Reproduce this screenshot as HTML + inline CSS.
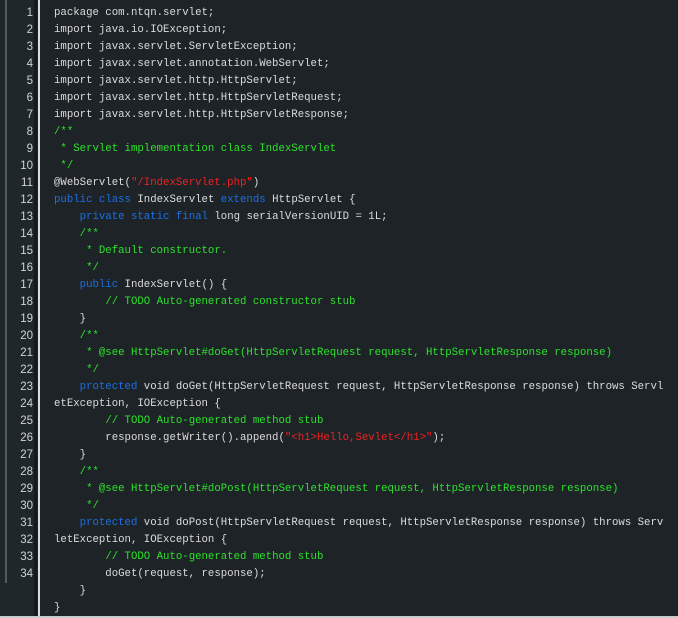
<!DOCTYPE html>
<html><head><style>
html,body{margin:0;padding:0;}
body{width:678px;height:618px;background:#1d2326;position:relative;overflow:hidden;font-family:Consolas,"Liberation Mono",monospace;font-size:10.7px;color:#dcdcdc;}
.gut{position:absolute;left:0;top:0;width:36px;height:616px;background:#1f272b;}
.bar{position:absolute;left:5px;top:0;width:2px;height:583px;background:#555b5e;}
.sep1{position:absolute;left:34px;top:0;width:3px;height:616px;background:#151a1c;}
.sep2{position:absolute;left:38px;top:0;width:2px;height:616px;background:#d8dcdd;}
.bot{position:absolute;left:0;top:616px;width:678px;height:2px;background:#c8cccd;}
.nums{position:absolute;left:0;top:5px;width:33px;text-align:right;font-family:"Liberation Sans",sans-serif;font-size:11.5px;line-height:17px;color:#cfd3d4;}
pre{position:absolute;left:54px;top:5px;margin:0;font:inherit;line-height:17px;white-space:pre;}
.k{color:#1e6fe0}.c{color:#2ee12e}.s{color:#ee2222}
</style></head><body>
<div class="gut"></div><div class="bar"></div><div class="sep1"></div><div class="sep2"></div><div class="bot"></div>
<div class="nums">1<br>2<br>3<br>4<br>5<br>6<br>7<br>8<br>9<br>10<br>11<br>12<br>13<br>14<br>15<br>16<br>17<br>18<br>19<br>20<br>21<br>22<br>23<br>24<br>25<br>26<br>27<br>28<br>29<br>30<br>31<br>32<br>33<br>34</div>
<pre>package com.ntqn.servlet;
import java.io.IOException;
import javax.servlet.ServletException;
import javax.servlet.annotation.WebServlet;
import javax.servlet.http.HttpServlet;
import javax.servlet.http.HttpServletRequest;
import javax.servlet.http.HttpServletResponse;
<span class="c">/**</span>
<span class="c"> * Servlet implementation class IndexServlet</span>
<span class="c"> */</span>
@WebServlet(<span class="s">"/IndexServlet.php"</span>)
<span class="k">public</span> <span class="k">class</span> IndexServlet <span class="k">extends</span> HttpServlet {
    <span class="k">private</span> <span class="k">static</span> <span class="k">final</span> long serialVersionUID = 1L;
    <span class="c">/**</span>
<span class="c">     * Default constructor.</span>
<span class="c">     */</span>
    <span class="k">public</span> IndexServlet() {
        <span class="c">// TODO Auto-generated constructor stub</span>
    }
    <span class="c">/**</span>
<span class="c">     * @see HttpServlet#doGet(HttpServletRequest request, HttpServletResponse response)</span>
<span class="c">     */</span>
    <span class="k">protected</span> void doGet(HttpServletRequest request, HttpServletResponse response) throws Servl
etException, IOException {
        <span class="c">// TODO Auto-generated method stub</span>
        response.getWriter().append(<span class="s">"&lt;h1&gt;Hello,Sevlet&lt;/h1&gt;"</span>);
    }
    <span class="c">/**</span>
<span class="c">     * @see HttpServlet#doPost(HttpServletRequest request, HttpServletResponse response)</span>
<span class="c">     */</span>
    <span class="k">protected</span> void doPost(HttpServletRequest request, HttpServletResponse response) throws Serv
letException, IOException {
        <span class="c">// TODO Auto-generated method stub</span>
        doGet(request, response);
    }
}</pre>
</body></html>
